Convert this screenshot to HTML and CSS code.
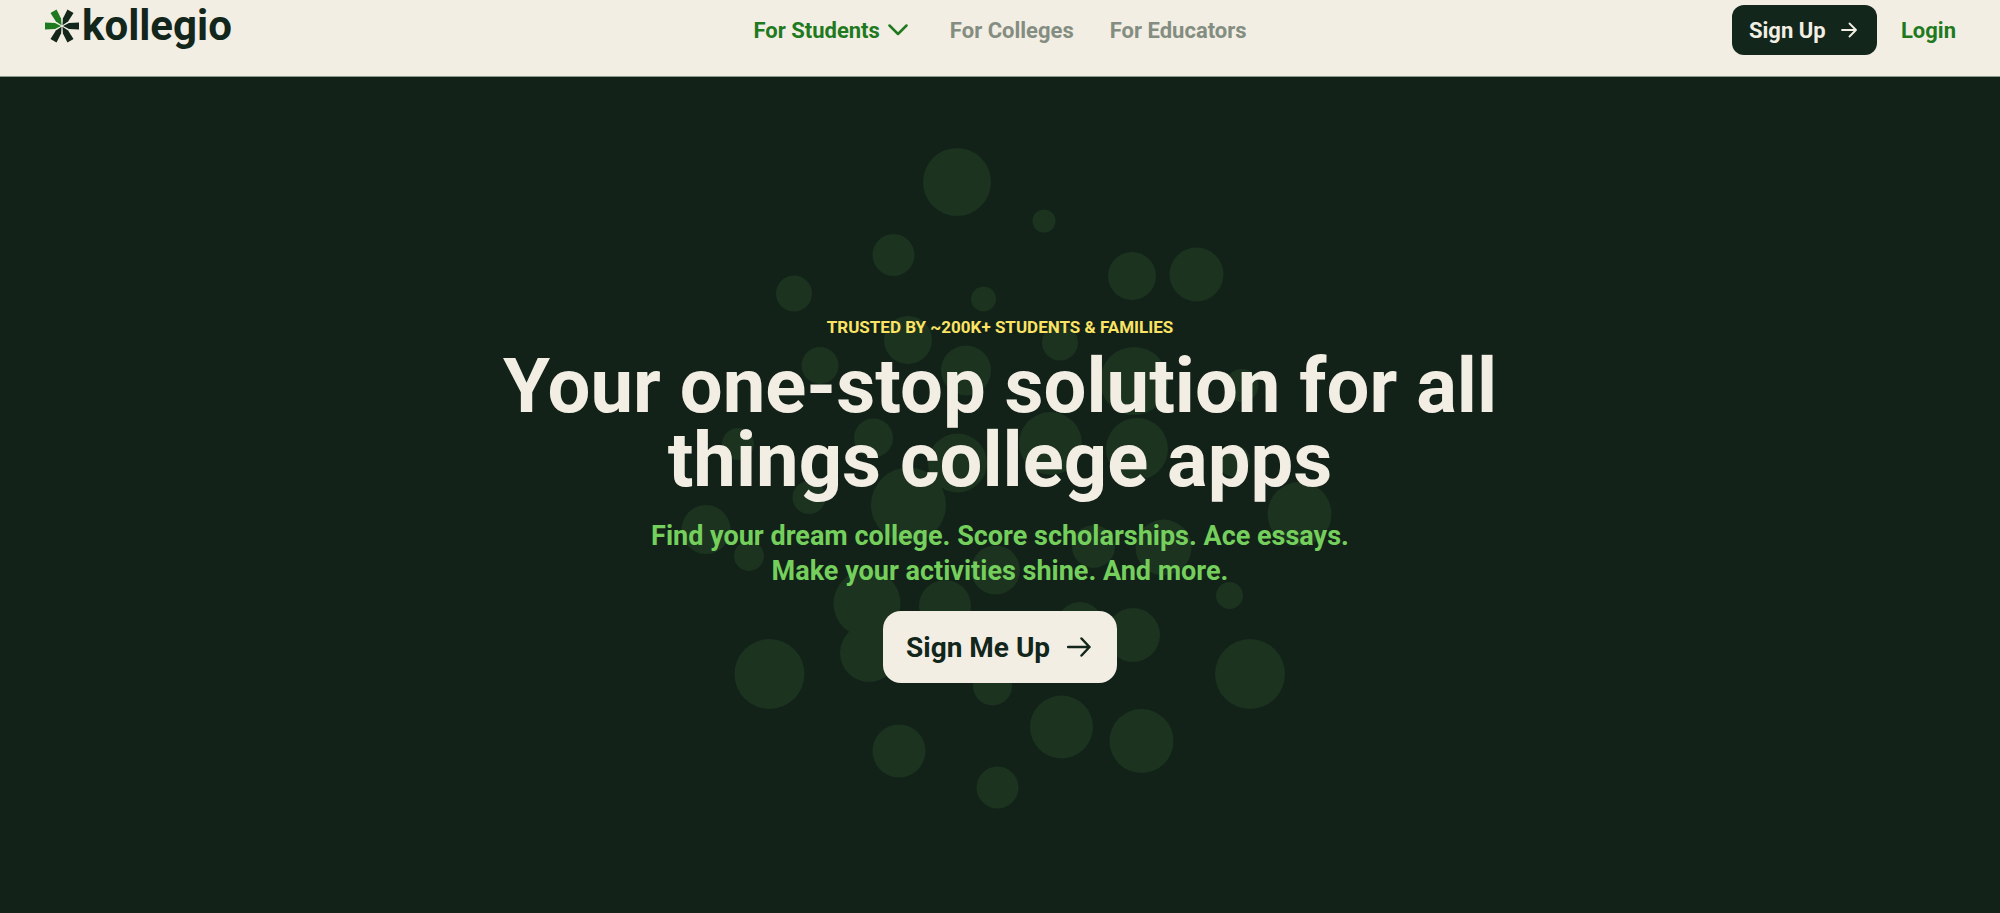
FILE: index.html
```html
<!DOCTYPE html>
<html lang="en">
<head>
  <meta charset="utf-8">
  <meta name="viewport" content="width=device-width, initial-scale=1">
  <title>Kollegio</title>
  <link rel="stylesheet" href="styles.css">
</head>
<body>
  <header class="header">
    <a class="logo" href="#">
      <svg class="logo-mark" viewBox="-18 -18 36 36" aria-hidden="true">
        <g fill="#1f7a1f">
          <path d="M-1 0L-7 -3L-17 -3.500V3.500L-7 3Z"/>
          <path d="M-1 0L-7 -3L-17 -3.500V3.500L-7 3Z" transform="rotate(60)"/>
        </g>
        <g fill="#12261b">
          <path d="M-1 0L-7 -3L-17 -3.500V3.500L-7 3Z" transform="rotate(120)"/>
          <path d="M-1 0L-7 -3L-17 -3.500V3.500L-7 3Z" transform="rotate(180)"/>
          <path d="M-1 0L-7 -3L-17 -3.500V3.500L-7 3Z" transform="rotate(240)"/>
          <path d="M-1 0L-7 -3L-17 -3.500V3.500L-7 3Z" transform="rotate(300)"/>
        </g>
      </svg>
      <span>kollegio</span>
    </a>
    <nav class="nav">
      <a class="active" href="#">For Students
        <svg class="chevron" viewBox="0 0 20 12" aria-hidden="true"><path d="M1.500 1.500L10 10L18.500 1.500"/></svg>
      </a>
      <a href="#">For Colleges</a>
      <a href="#">For Educators</a>
    </nav>
    <div class="actions">
      <button class="btn btn-dark" type="button">Sign Up
        <svg class="arrow" viewBox="0 0 16 16" aria-hidden="true"><path d="M1 8H15M8.500 1.500L15 8L8.500 14.500"/></svg>
      </button>
      <a class="login" href="#">Login</a>
    </div>
  </header>

  <main class="hero">
    <svg class="dots" viewBox="650 145 700 700" aria-hidden="true">
      <circle cx="957" cy="182" r="34"/>
      <circle cx="1044" cy="221" r="11.500"/>
      <circle cx="893.500" cy="255" r="21"/>
      <circle cx="794" cy="293.500" r="18"/>
      <circle cx="983.500" cy="299" r="12.500"/>
      <circle cx="1132" cy="276" r="24"/>
      <circle cx="1196.500" cy="274.500" r="27"/>
      <circle cx="908" cy="340" r="24"/>
      <circle cx="1060" cy="342.500" r="18"/>
      <circle cx="820" cy="365.500" r="18.500"/>
      <circle cx="966" cy="370.500" r="25"/>
      <circle cx="1134" cy="381" r="34"/>
      <circle cx="1242" cy="385.500" r="16.500"/>
      <circle cx="738" cy="444" r="16"/>
      <circle cx="873.500" cy="438" r="19.500"/>
      <circle cx="957.500" cy="463" r="29.500"/>
      <circle cx="1050.500" cy="443.500" r="31.500"/>
      <circle cx="1137" cy="449" r="31"/>
      <circle cx="1234" cy="461" r="16"/>
      <circle cx="908.500" cy="505" r="37.500"/>
      <circle cx="809" cy="497.500" r="16.500"/>
      <circle cx="706" cy="529.500" r="24.500"/>
      <circle cx="749" cy="556" r="15"/>
      <circle cx="1299.500" cy="514" r="32"/>
      <circle cx="1093.500" cy="546.500" r="21.500"/>
      <circle cx="1163.500" cy="547.500" r="28"/>
      <circle cx="995.500" cy="570" r="24.500"/>
      <circle cx="867" cy="603.500" r="33.500"/>
      <circle cx="945" cy="606" r="26"/>
      <circle cx="1229.500" cy="595.500" r="13.500"/>
      <circle cx="1080" cy="625" r="23"/>
      <circle cx="1133" cy="635" r="27"/>
      <circle cx="869" cy="653" r="29"/>
      <circle cx="769.500" cy="674" r="35"/>
      <circle cx="1250" cy="674" r="35"/>
      <circle cx="992.500" cy="686" r="19.500"/>
      <circle cx="1061.500" cy="727" r="31.500"/>
      <circle cx="1141.500" cy="741" r="32"/>
      <circle cx="899" cy="751" r="26.500"/>
      <circle cx="997.500" cy="787.500" r="21"/>
    </svg>
    <div class="hero-content">
      <p class="eyebrow">TRUSTED BY ~200K+ STUDENTS &amp; FAMILIES</p>
      <h1>Your one-stop solution for all<br>things college apps</h1>
      <p class="subtitle">Find your dream college. Score scholarships. Ace essays.<br>Make your activities shine. And more.</p>
      <button class="btn btn-light" type="button">Sign Me Up
        <svg class="arrow" viewBox="0 0 24 20" aria-hidden="true"><path d="M1 10H22.500M14.500 1.500L22.500 10L14.500 18.500"/></svg>
      </button>
    </div>
  </main>
</body>
</html>
```
FILE: styles.css
```css
* {
  box-sizing: border-box;
}

body {
  display: flex;
  flex-direction: column;
  min-height: 100vh;
  margin: 0;
  background: #122219;
  color: #f3eee3;
  font-family: Roboto, "Liberation Sans", sans-serif;
  font-weight: 700;
}

a {
  color: inherit;
  text-decoration: none;
}

/* Header */
.header {
  display: grid;
  grid-template-columns: 1fr auto 1fr;
  align-items: center;
  padding: 5px 44px 21px;
  border-bottom: 1px solid #8b9a8c;
  background: #f3eee3;
  color: #12261b;
  font-size: 22px;
}

.logo {
  display: flex;
  align-items: center;
  align-self: start;
  height: 42px;
  font-size: 42px;
  line-height: 42px;
}

.logo-mark {
  width: 36px;
  height: 36px;
  margin-right: 2px;
}

.nav {
  display: flex;
  gap: 36px;
  color: #848d81;
}

.nav .active {
  display: flex;
  align-items: center;
  gap: 8px;
  margin-right: 6px;
}

.active,
.login {
  color: #1f7a1f;
}

.chevron {
  width: 20px;
  height: 12px;
}

.chevron path,
.arrow path {
  fill: none;
  stroke: currentColor;
  stroke-linecap: round;
  stroke-linejoin: round;
  stroke-width: 2.5;
}

.actions {
  display: flex;
  align-items: center;
  justify-content: flex-end;
  gap: 24px;
}

.btn {
  display: inline-flex;
  align-items: center;
  justify-content: space-between;
  border: 0;
  font: inherit;
  cursor: pointer;
}

.btn-dark {
  width: 145px;
  height: 50px;
  padding: 0 20px 0 17px;
  border-radius: 12px;
  background: #12261b;
  color: #f3eee3;
}

.btn-dark .arrow {
  width: 16px;
  height: 16px;
}

.btn-dark .arrow path {
  stroke-width: 1.8;
}

/* Hero */
.hero {
  position: relative;
  display: flex;
  flex: 1;
  align-items: center;
  justify-content: center;
  padding: 40px 24px 32px;
  overflow: hidden;
  text-align: center;
}

/* decorative, sits behind the text */
.dots {
  position: absolute;
  top: 50%;
  left: 50%;
  width: 700px;
  height: 700px;
  transform: translate(-50%, -50%);
  fill: #1b331f;
}

.hero-content {
  position: relative;
}

.eyebrow {
  margin: 0 0 10px;
  color: #fbe364;
  font-size: 17px;
  line-height: 24px;
}

h1 {
  margin: 0 0 22px;
  font-size: 76px;
  font-weight: 700;
  line-height: 74px;
}

.subtitle {
  margin: 0 0 22px;
  color: #75cf5c;
  font-size: 27px;
  line-height: 35px;
}

.btn-light {
  width: 234px;
  height: 72px;
  padding: 0 26px 0 23px;
  border-radius: 18px;
  background: #f3eee3;
  color: #12261b;
  font-size: 28px;
}

.btn-light .arrow {
  width: 24px;
  height: 20px;
}
```
